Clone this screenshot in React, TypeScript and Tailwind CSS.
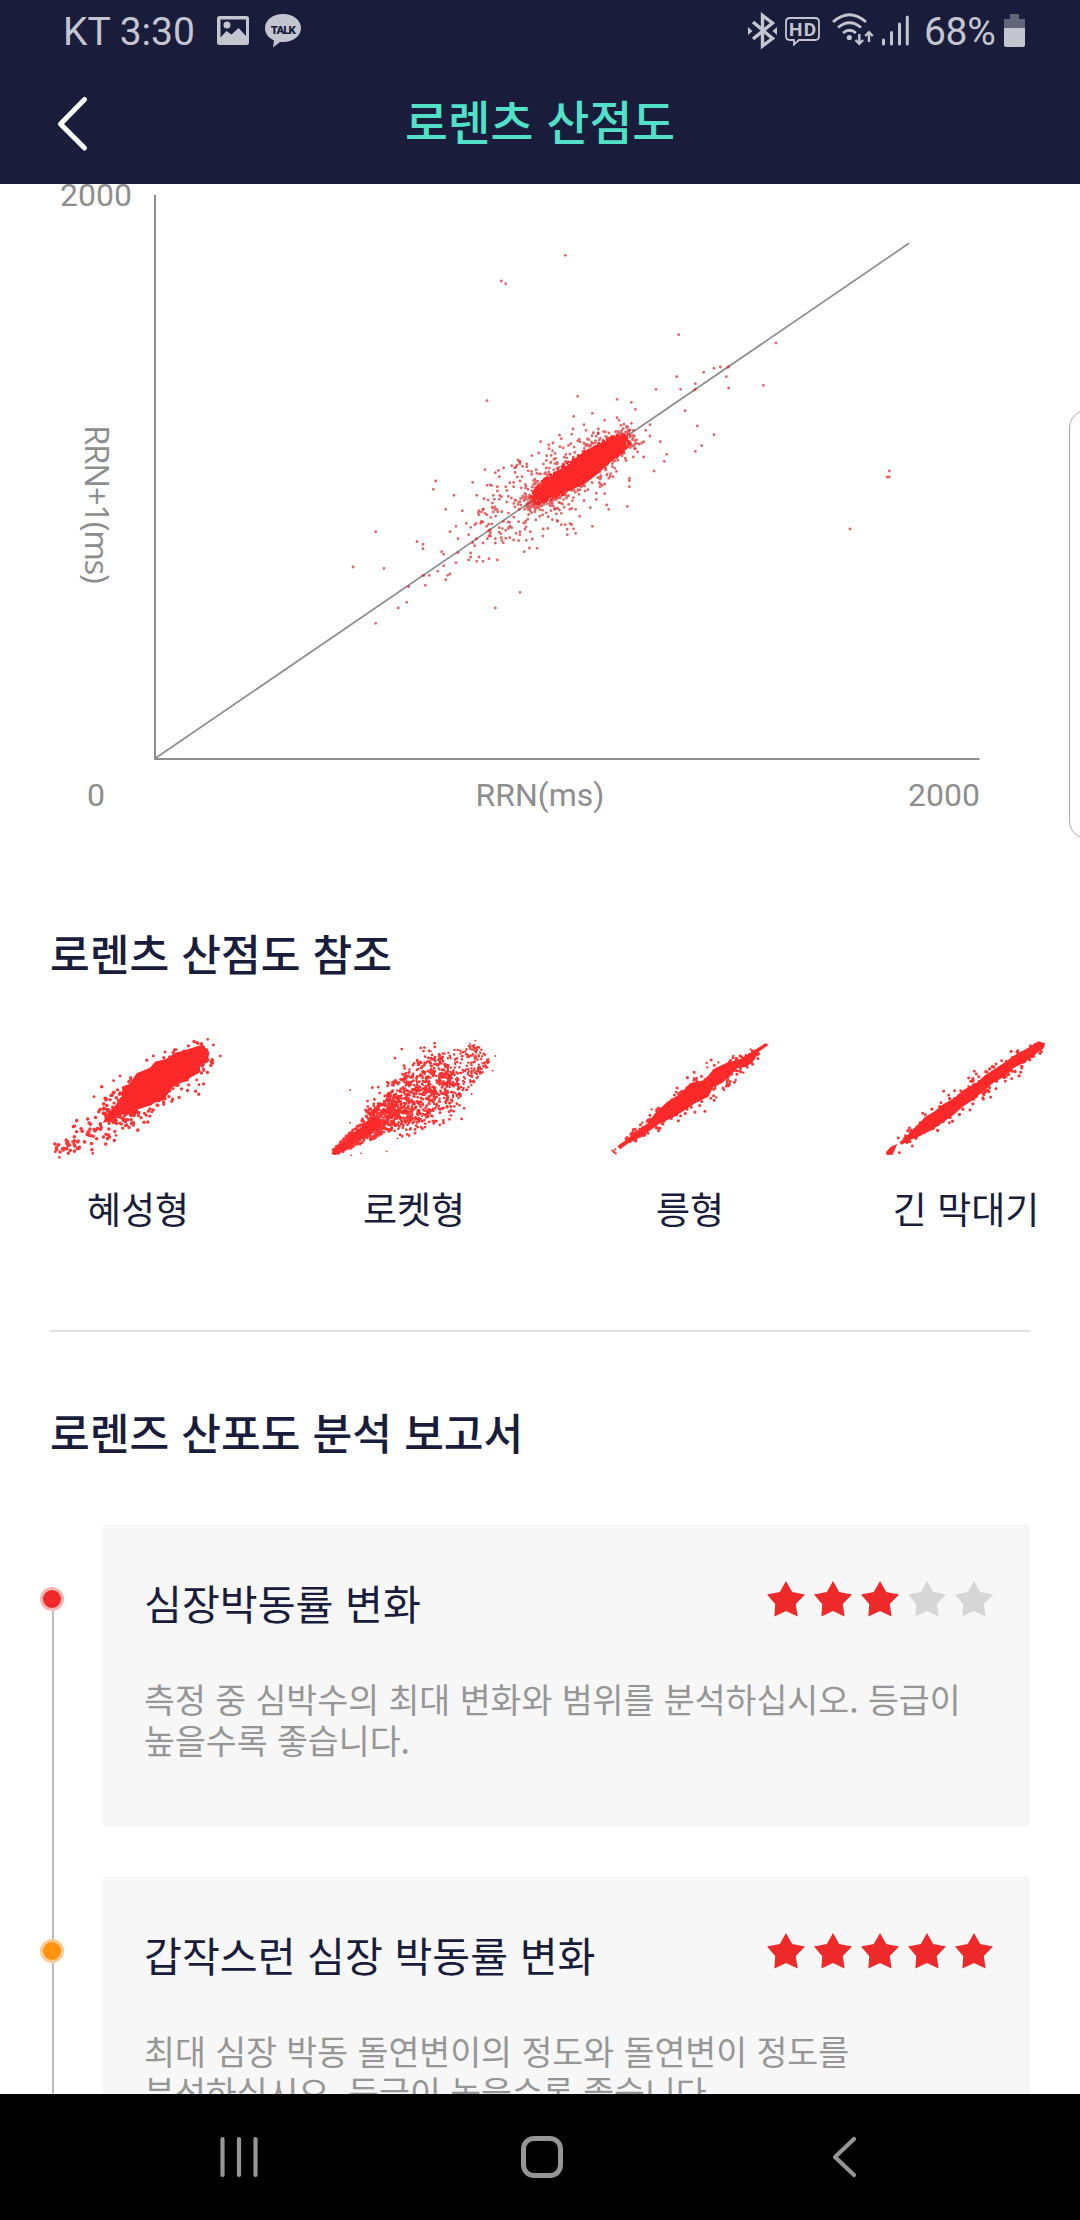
import React from "react";

type Pt = [number, number];

/** Small deterministic generator so the clouds look the same on every render. */
function rng(seed: number) {
  let s = seed;
  return () => {
    s = (s * 1664525 + 1013904223) % 4294967296;
    return s / 4294967296;
  };
}

type Band = { seed: number; n: number; from: Pt; to: Pt; widths: number[]; flat?: boolean };

/** Scatters points along a segment; `widths` gives the half width at even steps along it. */
function band({ seed, n, from, to, widths, flat }: Band): Pt[] {
  const r = rng(seed);
  const dx = to[0] - from[0];
  const dy = to[1] - from[1];
  const len = Math.hypot(dx, dy);
  const out: Pt[] = [];
  for (let i = 0; i < n; i++) {
    const t = r();
    const k = t * (widths.length - 1);
    const j = Math.min(Math.floor(k), widths.length - 2);
    const w = widths[j] + (widths[j + 1] - widths[j]) * (k - j);
    const g = flat ? r() * 2 - 1 : (r() + r() + r() - 1.5) * 1.35;
    out.push([from[0] + dx * t - (dy / len) * w * g, from[1] + dy * t + (dx / len) * w * g]);
  }
  return out;
}

function dots(points: Pt[], r: number) {
  return points
    .map(([x, y]) => `M${(x - r).toFixed(1)} ${y.toFixed(1)}a${r} ${r} 0 1 0 ${2 * r} 0a${r} ${r} 0 1 0 ${-2 * r} 0`)
    .join("");
}

const outliers: Pt[] = [
  [676, 76], [484, 153], [497, 161], [1016, 314], [1010, 440], [948, 478], [1022, 478], [441, 512], [713, 499],
  [831, 508], [874, 517], [886, 538], [757, 550], [701, 559], [831, 563], [837, 571], [794, 571], [732, 584],
  [738, 601], [775, 597], [775, 609], [695, 613], [664, 626], [602, 635], [639, 639], [596, 669], [627, 656],
  [874, 580], [930, 584], [917, 601], [930, 618], [961, 635], [980, 673], [973, 694], [942, 723], [911, 681],
  [880, 681], [868, 745], [868, 752], [868, 770], [862, 829], [800, 825], [806, 838], [794, 791], [769, 808],
  [751, 833], [719, 859], [757, 889], [707, 910], [682, 914], [676, 884], [664, 884], [695, 884], [651, 871],
  [534, 690], [540, 694], [540, 701], [515, 707], [528, 711], [435, 719], [466, 728], [478, 740], [398, 757],
  [441, 766], [287, 753], [280, 778], [342, 796], [410, 796], [317, 838], [367, 842], [348, 889], [330, 905],
  [107, 905], [231, 935], [249, 943], [249, 956], [39, 1011], [132, 1015], [305, 965], [311, 973], [354, 926],
  [386, 914], [379, 880], [404, 947], [398, 938], [392, 969], [392, 981], [386, 990], [417, 981], [410, 994],
  [429, 994], [447, 986], [472, 990], [553, 965], [348, 998], [311, 1007], [293, 1024], [268, 1036], [249, 1036],
  [251, 1037], [323, 1036], [330, 1032], [317, 1049], [256, 1066], [206, 1070], [200, 1117], [175, 1134],
  [107, 1180], [540, 1087], [466, 1134], [354, 968], [410, 927], [409, 926], [447, 918], [466, 926], [466, 939],
  [429, 939], [442, 926], [484, 923], [485, 931], [490, 938], [509, 923], [521, 930], [559, 931], [577, 927],
  [540, 905], [540, 914], [528, 910], [571, 905], [515, 893], [497, 901], [404, 884], [409, 880], [392, 892],
  [422, 880], [429, 876], [429, 838], [417, 842], [417, 854], [435, 850], [441, 854], [460, 846], [460, 796],
  [472, 770], [472, 783], [484, 800], [478, 808], [521, 757], [521, 770], [497, 770], [546, 740], [540, 753],
  [780, 770], [787, 766], [794, 762], [806, 745], [819, 740], [825, 715], [868, 601], [880, 601], [886, 656],
  [905, 639], [911, 635], [633, 842], [645, 838], [664, 850], [707, 838], [689, 838], [732, 812],
  [1066, 461], [1066, 478], [1064, 480], [1035, 542], [1091, 427], [1122, 415], [1141, 411], [1166, 410],
  [1164, 412], [1159, 440], [1166, 474], [1270, 466], [1308, 339], [1072, 588], [1122, 614], [1085, 647],
  [1066, 664], [1648, 723], [1641, 741], [1648, 741], [1530, 897],
].map(([x, y]) => [x, y] as Pt);

const halo = [
  ...band({ seed: 7, n: 620, from: [560, 832], to: [880, 612], widths: [26, 46, 54, 50, 46, 42, 26] }),
  ...band({ seed: 21, n: 130, from: [440, 900], to: [640, 775], widths: [34, 66, 90, 96, 80] }),
  ...band({ seed: 33, n: 60, from: [590, 770], to: [800, 625], widths: [60, 76, 74, 40] }),
];

const rim = band({ seed: 41, n: 620, from: [575, 812], to: [862, 625], widths: [16, 33, 39, 38, 37, 33, 20], flat: true });

function ScatterPlot() {
  return (
    <svg className="block h-[576px] w-[926px]" viewBox="154 184 926 576">
      <path d="M155 195V759H979.5" fill="none" stroke="#8e8e8e" strokeWidth="2" />
      <path d="M155 758.5L909 243.3" stroke="#8e8e8e" strokeWidth="1.7" />
      <g transform="translate(340 230) scale(0.33333)">
        <path d={dots(outliers, 4.3)} fill="#d92323" fillOpacity=".7" />
        <path d={dots(halo, 4.3)} fill="#d92323" fillOpacity=".7" />
        <path d={dots(rim, 4.3)} fill="#fb2828" />
        <path
          d="M575 810L590 778 625 752 650 722 690 703 718 675 750 655 780 640 812 626 857 624 858 645 845 672 820 690 795 710 770 734 730 765 690 780 650 798 605 808Z"
          fill="#ff2828"
        />
      </g>
    </svg>
  );
}

type Shape = { label: string; view: string; core: string; clouds: { pts: Pt[]; r: number }[] };

const shapes: Shape[] = [
  {
    label: "혜성형",
    view: "-120 0 828 450",
    core: "M188 308L205 278 222 262 248 225 246 200 268 192 290 160 330 143 345 125 380 116 405 98 430 92 480 76 498 84 508 98 502 128 482 135 478 158 455 170 440 182 400 198 385 220 372 240 340 250 325 258 295 268 285 292 262 282 235 284 215 300 205 305Z",
    clouds: [
      { r: 5, pts: band({ seed: 3, n: 380, from: [200, 300], to: [506, 98], widths: [30, 42, 50, 50, 44, 32] }) },
      { r: 5.4, pts: band({ seed: 14, n: 120, from: [52, 396], to: [290, 250], widths: [16, 26, 40, 56, 50] }) },
      { r: 4.2, pts: [[503, 58], [520, 75], [541, 108], [518, 130], [518, 122], [375, 96], [340, 108], [470, 180], [477, 194], [158, 400], [228, 346], [58, 412], [46, 395], [104, 318], [162, 230], [240, 168], [221, 182]] },
    ],
  },
  {
    label: "로켓형",
    view: "708 0 828 450",
    core: "M874 402L890 382 918 362 935 342 965 320 985 300 1005 296 1022 302 1025 318 1005 330 985 345 960 360 930 378 905 394 885 404Z",
    clouds: [
      { r: 4.6, pts: band({ seed: 5, n: 420, from: [880, 398], to: [1090, 255], widths: [8, 22, 34, 46, 54], flat: true }) },
      { r: 4.2, pts: band({ seed: 6, n: 620, from: [1000, 312], to: [1240, 155], widths: [36, 60, 78, 80] }) },
      { r: 3.6, pts: band({ seed: 8, n: 400, from: [1090, 250], to: [1335, 100], widths: [66, 78, 76, 58, 34], flat: true }) },
      { r: 2.8, pts: [[930, 210], [1306, 62], [1290, 72], [1366, 108], [1358, 152], [1295, 222], [1040, 394], [1073, 355], [933, 406], [963, 400], [930, 308], [1173, 94]] },
    ],
  },
  {
    label: "릉형",
    view: "-84 0 828 450",
    core: "M112 378L150 352 180 326 205 308 225 280 262 245 300 222 330 190 375 180 400 148 440 128 480 118 520 92 556 70 566 74 530 100 525 118 500 140 470 145 450 168 425 190 400 200 385 230 345 250 315 270 280 292 240 310 195 342 150 366 120 388Z",
    clouds: [
      { r: 4.6, pts: band({ seed: 9, n: 300, from: [140, 362], to: [535, 96], widths: [7, 17, 28, 36, 34, 23, 10] }) },
      { r: 3.6, pts: [[98, 392], [102, 396], [107, 400], [106, 388], [380, 129], [382, 142], [415, 127], [215, 268], [187, 308], [288, 216], [350, 174], [341, 182], [467, 180], [432, 210], [409, 232], [490, 158], [460, 108], [512, 88], [446, 198], [325, 202]] },
    ],
  },
  {
    label: "긴 막대기",
    view: "744 0 828 450",
    core: "M958 368L985 343 1010 318 1035 291 1065 273 1090 252 1120 236 1150 210 1190 188 1215 166 1245 146 1280 123 1310 102 1345 83 1375 64 1395 70 1392 84 1360 107 1335 127 1300 144 1275 169 1240 188 1210 214 1180 239 1150 259 1120 285 1085 310 1055 330 1020 348 985 362 965 374ZM918 396L933 380 952 372 938 404 920 405Z",
    clouds: [
      { r: 5, pts: band({ seed: 12, n: 210, from: [975, 360], to: [1382, 78], widths: [9, 21, 25, 24, 24, 22, 11] }) },
      { r: 4.4, pts: [[955, 354], [958, 398], [997, 378], [988, 324], [1028, 280], [1036, 284], [1083, 248], [1091, 214], [1106, 226], [1124, 212], [1142, 212], [1166, 200], [1166, 174], [1183, 154], [1189, 162], [1196, 170], [1221, 156], [1248, 132], [1265, 122], [1313, 92], [1322, 157], [1295, 176], [1276, 184], [1232, 232], [1210, 238], [1170, 270], [1108, 308], [1248, 206]] },
    ],
  },
];

function ShapeCard({ shape }: { shape: Shape }) {
  return (
    <div className="flex w-[276px] shrink-0 flex-col items-center">
      <svg className="block h-[150px] w-[276px]" viewBox={shape.view}>
        <path d={shape.core} fill="#ff2828" />
        {shape.clouds.map((c, i) => (
          <path key={i} d={dots(c.pts, c.r)} fill="#fb2b2b" fillOpacity=".95" />
        ))}
      </svg>
      <span className="mt-[11px] text-[37px] leading-[55px]">{shape.label}</span>
    </div>
  );
}

function Star({ filled }: { filled: boolean }) {
  return (
    <svg className="block h-[36px] w-[38px]" viewBox="0 0 38 36">
      <path
        d="M19 0L25.2 10.9 38 13.5 28.8 22.9 30.6 35.5 19 30 7.4 35.5 8.2 22.9 0 13.5 12.8 10.9Z"
        className={filled ? "fill-[#ee2929]" : "fill-[#d6d6d6]"}
      />
    </svg>
  );
}

type Report = { title: string; lines: string[]; stars: number; dot: string };

const reports: Report[] = [
  {
    title: "심장박동률 변화",
    lines: ["측정 중 심박수의 최대 변화와 범위를 분석하십시오. 등급이", "높을수록 좋습니다."],
    stars: 3,
    dot: "bg-[#ee2929] border-[#f9b3b3]",
  },
  {
    title: "갑작스런 심장 박동률 변화",
    lines: ["최대 심장 박동 돌연변이의 정도와 돌연변이 정도를", "분석하십시오. 등급이 높을수록 좋습니다."],
    stars: 5,
    dot: "bg-[#ff930f] border-[#fccb92]",
  },
];

function ReportRow({ report, first }: { report: Report; first: boolean }) {
  return (
    <div className="flex pr-[50px]">
      <div className="flex w-[102px] shrink-0 flex-col items-start">
        <div className={first ? "h-[63px]" : "ml-[52px] h-[63px] w-[2px] bg-[#bdbdbd]"} />
        <div className={`ml-[40px] size-[24px] rounded-full border-3 ${report.dot}`} />
        <div className="ml-[52px] w-[2px] flex-1 bg-[#bdbdbd]" />
      </div>
      <div className="mb-[49px] h-[303px] flex-1 rounded-[5px] bg-[#f7f7f7] pr-[37px] pl-[42px]">
        <div className="mt-[47px] flex h-[62px] items-center justify-between">
          <h3 className="text-[41.2px] leading-[62px]">{report.title}</h3>
          <div className="mb-[7px] flex gap-[9px]">
            {[0, 1, 2, 3, 4].map((i) => (
              <Star key={i} filled={i < report.stars} />
            ))}
          </div>
        </div>
        <p className="mt-[45px] text-[33.6px] leading-[41px] whitespace-nowrap text-[#969696]">
          {report.lines[0]}
          <br />
          {report.lines[1]}
        </p>
      </div>
    </div>
  );
}

function StatusBar() {
  return (
    <div className="flex h-[63px] items-center pl-[63px] font-[Roboto,sans-serif] text-[39px] leading-[63px] text-[#c5c5d0]">
      <span className="mt-[2px] w-[154px]">KT 3:30</span>
      <svg className="h-[63px] w-[90px]" viewBox="217 0 90 63">
        <path
          fillRule="evenodd"
          fill="#c5c5d0"
          d="M219.500 16h27q2.500 0 2.500 2.500v24q0 2.500-2.500 2.500h-27q-2.500 0-2.500-2.500v-24q0-2.500 2.500-2.500ZM220.500 19.500v18l6-6.500 5 3.500 7-6.500 7.500 8v-16.500Z"
        />
        <circle cx="227" cy="25" r="3.500" fill="#c5c5d0" />
        <path d="M283 14c10 0 18 6 18 14s-8 14-18 14l-3 0-7 5.500 1-7c-6-3-9-7-9-12.500 0-8 8-14 18-14Z" fill="#c5c5d0" />
        <text x="283.300" y="33.500" textAnchor="middle" fontSize="11.500" fontWeight="900" fontFamily="Roboto" textLength="25" fill="#191c3b">
          TALK
        </text>
      </svg>
      <div className="flex-1" />
      <svg className="h-[63px] w-[176px]" viewBox="748 0 176 63">
        <g fill="none" stroke="#c5c5d0">
          <path d="M753 22l19.500 16.500-10 7.500v-30.500l10 7.500L753 39" strokeWidth="3.400" />
          <path d="M748 27l4.500 4-4.500 4ZM777 27l-4.500 4 4.500 4Z" fill="#c5c5d0" stroke="none" />
          <path d="M790 18h25q4 0 4 4v14q0 4-4 4h-16l-5 4.500v-4.500h-4q-4 0-4-4v-14q0-4 4-4Z" strokeWidth="1.800" />
          <path d="M833 22q16.500-14.500 33 0M838 27.500q11.500-9.500 23 0M843 33q6.500-5.500 13 0" strokeWidth="2.800" />
          <path d="M859.300 34v9M855.500 40l3.800 3.800 3.800-3.800M869 42v-9M865.200 36l3.800-3.800 3.800 3.800" strokeWidth="2.400" />
          <path d="M883.500 40v4M891.500 32.500v11.500M899.500 24v20M907.300 17v27" strokeWidth="3" strokeLinecap="round" />
        </g>
        <circle cx="849.300" cy="37.500" r="2.600" fill="#c5c5d0" />
        <text x="802.500" y="36" textAnchor="middle" fontSize="19" fontWeight="700" fontFamily="Roboto" textLength="27" fill="#c5c5d0">
          HD
        </text>
      </svg>
      <span className="mt-[2px] w-[80px] tracking-[-0.3px]">68%</span>
      <svg className="mr-[55px] h-[63px] w-[21px]" viewBox="1004 0 21 63">
        <path d="M1010 14h9v5h6v9h-21v-9h6Z" fill="#636579" />
        <path d="M1004 28h21v17q0 2-2 2h-17q-2 0-2-2Z" fill="#c5c5d0" />
      </svg>
    </div>
  );
}

function NavBar() {
  return (
    <nav className="flex h-[126px] shrink-0 items-center justify-between bg-black pr-[223px] pl-[219px]">
      <svg className="h-[42px] w-[40px]" viewBox="0 0 40 42">
        <path d="M3.500 3v36M20 3v36M36.500 3v36" stroke="#969696" strokeWidth="4.200" strokeLinecap="round" />
      </svg>
      <div className="mr-[6px] size-[42px] rounded-[13px] border-5 border-[#969696]" />
      <svg className="h-[42px] w-[26px]" viewBox="0 0 26 42">
        <path d="M23 3L4 21 23 39" fill="none" stroke="#969696" strokeWidth="4.200" strokeLinecap="round" strokeLinejoin="round" />
      </svg>
    </nav>
  );
}

export default function App() {
  return (
    <div
      lang="ko"
      className="relative flex h-[2220px] w-[1080px] flex-col overflow-hidden bg-white font-['Noto_Sans_CJK_KR',sans-serif] text-[#191c3b]"
    >
      <header className="h-[184px] shrink-0 bg-[#191c3b]">
        <StatusBar />
        <div className="flex h-[121px] items-center">
          <svg className="h-[60px] w-[100px]" viewBox="0 0 100 60">
            <path d="M84.500 5.500L60.500 30 84.500 54" fill="none" stroke="#fff" strokeWidth="5" strokeLinecap="round" strokeLinejoin="round" />
          </svg>
          <h1 className="mr-[100px] mb-[7px] flex-1 text-center text-[46.600px] leading-[70px] font-medium text-[#52e0c8]">로렌츠 산점도</h1>
        </div>
      </header>

      <main className="h-[1910px] shrink-0 overflow-hidden">
        <section className="h-[696px] font-[Roboto,sans-serif] text-[32px] leading-[38px] text-[#8e8e8e]">
          <div className="flex">
            <div className="flex w-[154px] flex-col items-start">
              <span className="mt-[-8px] pl-[60px]">2000</span>
              <span className="mt-[211px] ml-[78px] font-['Open_Sans',sans-serif] text-[33px] tracking-[-1.3px] [writing-mode:vertical-rl]">
                RRN+1(ms)
              </span>
            </div>
            <ScatterPlot />
          </div>
          <div className="mt-[16px] flex justify-between pr-[100px] pl-[87px]">
            <span className="w-[72px]">0</span>
            <span className="ml-[13px]">RRN(ms)</span>
            <span>2000</span>
          </div>
        </section>

        <section>
          <h2 className="mt-[40px] ml-[50px] text-[43.200px] leading-[64px] font-medium">로렌츠 산점도 참조</h2>
          <div className="mt-[36px] flex">
            {shapes.map((s) => (
              <ShapeCard key={s.label} shape={s} />
            ))}
          </div>
          <div className="mx-[50px] mt-[94px] h-[2px] bg-[#e2e2e2]" />
        </section>

        <section>
          <h2 className="mt-[67px] ml-[50px] text-[43.200px] leading-[64px] font-medium">로렌즈 산포도 분석 보고서</h2>
          <div className="mt-[61px]">
            {reports.map((r, i) => (
              <ReportRow key={r.title} report={r} first={i === 0} />
            ))}
          </div>
        </section>
      </main>

      <NavBar />

      {/* Edge panel handle, mostly off screen */}
      <div className="absolute top-[410px] left-[1069px] h-[429px] w-[40px] rounded-[18px] border-[1.5px] border-[#a8a8a8] bg-white" />
    </div>
  );
}
